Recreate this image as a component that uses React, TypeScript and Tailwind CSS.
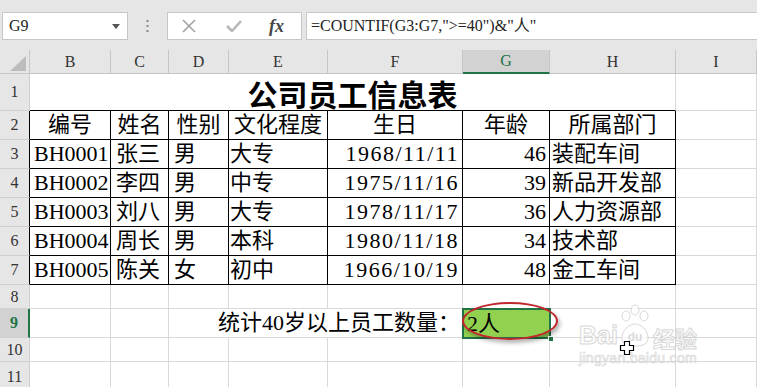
import React from 'react';

const cols = ['B', 'C', 'D', 'E', 'F', 'G', 'H', 'I'];
const heads = ['编号', '姓名', '性别', '文化程度', '生日', '年龄', '所属部门'];
const data = [
  ['BH0001', '张三', '男', '大专', '1968/11/11', '46', '装配车间'],
  ['BH0002', '李四', '男', '中专', '1975/11/16', '39', '新品开发部'],
  ['BH0003', '刘八', '男', '大专', '1978/11/17', '36', '人力资源部'],
  ['BH0004', '周长', '男', '本科', '1980/11/18', '34', '技术部'],
  ['BH0005', '陈关', '女', '初中', '1966/10/19', '48', '金工车间'],
];

// per column alignment/padding for the data rows
const colCls = [
  'justify-start pl-[4px]',
  'justify-start pl-[5px]',
  'justify-start pl-[5px]',
  'justify-start pl-[1px]',
  'justify-end pr-[3px] tracking-[1.5px]',
  'justify-end pr-[3px] bg-[#92d050]',
  'justify-start pl-[2px]',
];

const rowHead = 'flex items-center justify-center bg-[#e6e6e6] text-[16px] text-[#333] border-b border-r border-[#cfcfcf]';
const grid = 'border-r border-b border-[#d9d9d9] bg-white';
const tbl = 'flex items-center whitespace-nowrap overflow-hidden border-r border-b border-black bg-white text-[22px] text-black leading-none';

const App: React.FC = () => {
  return (
    <div className="relative w-[757px] h-[387px] overflow-hidden bg-[#e6e6e6] font-['Liberation_Serif','Noto_Sans_CJK_SC',serif]">
      {/* formula bar */}
      <div className="h-[50px] flex items-start pt-[12px]">
        <div className="ml-[2px] w-[126px] h-[28px] bg-white border border-[#c6c6c6] flex items-center justify-between pl-[6px] pr-[7px]">
          <span className="text-[16px] text-[#222]">G9</span>
          <svg width="8" height="5" viewBox="0 0 8 5"><path d="M0 0h8L4 5z" fill="#555" /></svg>
        </div>
        <div className="w-[39px] h-[28px] flex items-center justify-center">
          <svg width="3" height="12" viewBox="0 0 3 12">
            <rect x="0.5" y="0" width="2" height="2" fill="#888" />
            <rect x="0.5" y="5" width="2" height="2" fill="#888" />
            <rect x="0.5" y="10" width="2" height="2" fill="#888" />
          </svg>
        </div>
        <div className="w-[135px] h-[28px] bg-white border border-[#c6c6c6] flex items-center pl-[14px]">
          <svg width="14" height="14" viewBox="0 0 14 14">
            <path d="M1 1L13 13M13 1L1 13" stroke="#a3a3a3" strokeWidth="1.6" />
          </svg>
          <svg className="ml-[30px]" width="16" height="12" viewBox="0 0 16 12">
            <path d="M1 6L6 11L15 1" stroke="#b8b8b8" strokeWidth="2.6" fill="none" />
          </svg>
          <span className="ml-[27px] italic font-bold text-[18px] text-[#444] leading-none">fx</span>
        </div>
        <div className="ml-[4px] flex-1 h-[28px] bg-white border border-[#c6c6c6] border-r-0 flex items-center pl-[4px]">
          <span className="text-[16px] text-[#222] whitespace-nowrap">=COUNTIF(G3:G7,"&gt;=40")&amp;"人"</span>
        </div>
      </div>

      {/* sheet */}
      <div className="grid grid-cols-[30px_81px_58px_60px_99px_135px_87px_126px_81px] grid-rows-[24px_37px_29px_29px_29px_29px_29px_29px_24px_29px_24px_30px]">
        {/* column headers */}
        <div className="relative bg-[#e6e6e6] border-r border-b border-[#c6c6c6]">
          <svg className="absolute left-[10px] top-[6px]" width="16" height="15" viewBox="0 0 16 15">
            <path d="M16 0V15H0z" fill="#bdbdbd" />
          </svg>
        </div>
        {cols.map((c) => (
          <div
            key={c}
            className={
              c === 'G'
                ? 'flex items-center justify-center bg-[#d2d2d2] text-[16px] text-[#217346] border-r border-[#c6c6c6] border-b-2 border-b-[#217346]'
                : 'flex items-center justify-center bg-[#e6e6e6] text-[16px] text-[#333] border-r border-b border-[#c6c6c6]'
            }
          >
            {c}
          </div>
        ))}

        {/* row 1 title */}
        <div className={rowHead}>1</div>
        <div className="col-span-7 flex items-start justify-center pt-[2px] bg-white border-r border-r-[#d9d9d9] border-b border-b-black">
          <span className="text-[30px] font-bold text-black leading-[34px] font-['Noto_Sans_CJK_SC',sans-serif]">公司员工信息表</span>
        </div>
        <div className={grid} />

        {/* row 2 headers */}
        <div className={rowHead + ' !border-r-black'}>2</div>
        {heads.map((h) => (
          <div key={h} className={tbl + ' justify-center'}>
            {h}
          </div>
        ))}
        <div className={grid} />

        {/* rows 3-7 */}
        {data.map((r, i) => (
          <React.Fragment key={r[0]}>
            <div className={rowHead + ' !border-r-black'}>{i + 3}</div>
            {r.map((v, j) => (
              <div key={j} className={tbl + ' ' + colCls[j]}>
                {v}
              </div>
            ))}
            <div className={grid} />
          </React.Fragment>
        ))}

        {/* row 8 */}
        <div className={rowHead}>8</div>
        {cols.map((c) => (
          <div key={c} className={grid} />
        ))}

        {/* row 9 */}
        <div className="flex items-center justify-center bg-[#d2d2d2] text-[16px] font-bold text-[#217346] border-b border-[#cfcfcf] border-r-2 border-r-[#217346]">9</div>
        <div className={grid} />
        <div className={grid} />
        <div className="col-span-3 flex items-center justify-end pr-[2px] bg-white border-r border-b border-[#d9d9d9] text-[22px] text-black leading-none whitespace-nowrap">
          统计40岁以上员工数量：
        </div>
        <div className="relative flex items-center pl-[4px] bg-[#92d050] text-[22px] text-black leading-none">
          2人
          <div className="absolute -left-[1px] -top-[1px] -right-[1px] -bottom-[1px] border-2 border-[#217346]" />
          <div className="absolute -right-[4px] -bottom-[4px] w-[6px] h-[6px] bg-[#217346] border border-white" />
        </div>
        <div className={grid} />
        <div className={grid} />

        {/* rows 10-11 */}
        {[10, 11].map((n) => (
          <React.Fragment key={n}>
            <div className={n === 11 ? rowHead + ' !items-start pt-[3px]' : rowHead}>{n}</div>
            {cols.map((c) => (
              <div key={c} className={grid} />
            ))}
          </React.Fragment>
        ))}
      </div>

      {/* red ellipse annotation */}
      <div className="absolute left-[462px] top-[302px] w-[96px] h-[38px] rounded-[50%] border-2 border-[#c0272d] shadow-[2px_3px_4px_rgba(0,0,0,0.3)]" />

      {/* watermark */}
      <div className="absolute left-[579px] top-[303px] w-[140px] h-[66px] opacity-80 pointer-events-none">
        <div className="flex items-end h-[45px]">
          <span className="text-[25px] font-bold leading-none text-white [-webkit-text-stroke:1px_#cfcfcf] font-['Liberation_Sans',sans-serif]">Bai</span>
          <svg width="36" height="44" viewBox="0 0 36 44" className="-ml-[1px]">
            <g fill="white" stroke="#cfcfcf" strokeWidth="1">
              <ellipse cx="9" cy="12" rx="4" ry="5" />
              <ellipse cx="18" cy="6" rx="4" ry="5" />
              <ellipse cx="27" cy="12" rx="4" ry="5" />
              <path d="M5 34C5 26 12 20 18 20C24 20 31 26 31 34C31 40 26 42 18 42C10 42 5 40 5 34Z" />
            </g>
            <text x="18" y="37" textAnchor="middle" fontSize="12" fontWeight="bold" fill="#d4d4d4" fontFamily="Liberation Sans">du</text>
          </svg>
          <span className="text-[22px] font-bold leading-none text-white [-webkit-text-stroke:1px_#cfcfcf] font-['Noto_Sans_CJK_SC',sans-serif]">经验</span>
        </div>
        <div className="text-[14px] leading-none mt-[3px] text-white [-webkit-text-stroke:0.7px_#cfcfcf] font-['Liberation_Sans',sans-serif] tracking-[0.3px]">
          jingyan.baidu.com
        </div>
      </div>

      {/* cursor */}
      <svg className="absolute left-[619px] top-[340px]" width="16" height="16" viewBox="0 0 16 16">
        <path d="M5.5 1.5H10.5V5.5H14.5V10.5H10.5V14.5H5.5V10.5H1.5V5.5H5.5Z" fill="white" stroke="black" strokeWidth="1.2" />
      </svg>
    </div>
  );
};

export default App;
